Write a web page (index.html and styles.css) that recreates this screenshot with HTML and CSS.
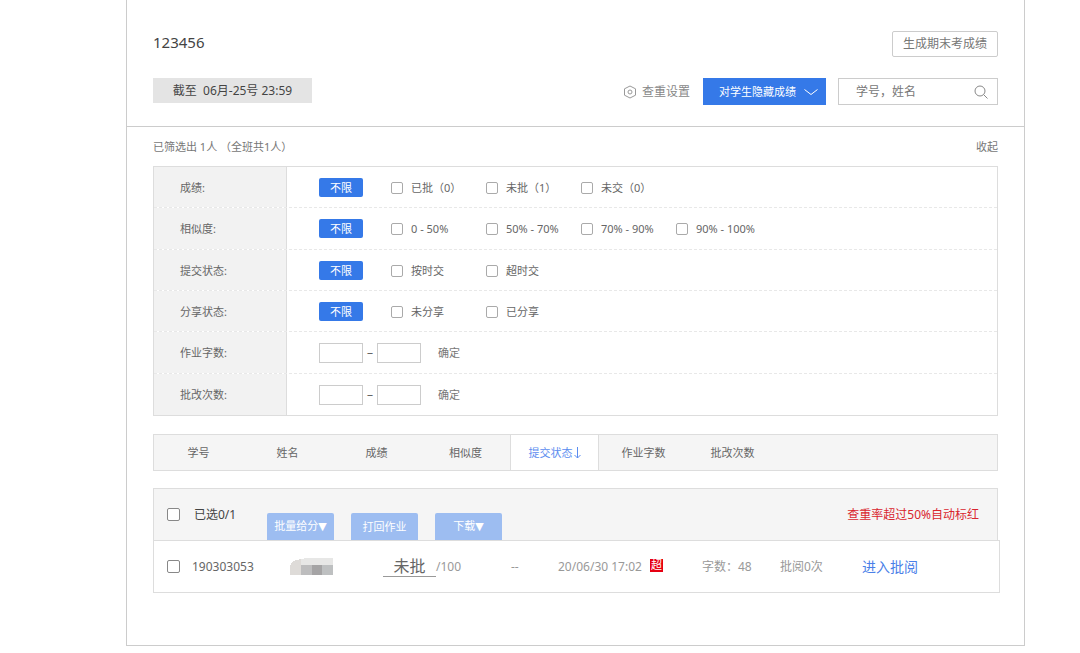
FILE: index.html
```html
<!DOCTYPE html>
<html lang="zh-CN">
<head>
<meta charset="utf-8">
<title>作业批阅</title>
<link rel="stylesheet" href="styles.css">
</head>
<body>
<main class="panel">
  <header class="head">
    <div class="head-row head-top">
      <h1 class="title">123456</h1>
      <button class="btn-outline" type="button">生成期末考成绩</button>
    </div>
    <div class="head-row">
      <span class="deadline">截至&nbsp; 06月-25号 23:59</span>
      <div class="tools">
        <a class="check-link" href="#">
          <svg width="14" height="14" viewBox="0 0 14 14" fill="none" stroke="#999"><path d="M7 1 12.5 3.8V10.2L7 13 1.5 10.2V3.8Z" stroke-linejoin="round"/><circle cx="7" cy="7" r="2"/></svg>
          查重设置
        </a>
        <button class="btn-hide" type="button">对学生隐藏成绩
          <svg width="14" height="8" viewBox="0 0 14 8" fill="none" stroke="#fff"><path d="M.5 1.5 7 6.5 13.5 1.5"/></svg>
        </button>
        <form class="search">
          <input class="search-input" type="text" placeholder="学号，姓名" aria-label="学号，姓名">
          <button class="search-btn" type="button" aria-label="搜索">
            <svg width="14" height="14" viewBox="0 0 14 14" fill="none" stroke="#888"><circle cx="6" cy="6" r="5"/><path d="M9.6 9.6 13.5 13.5"/></svg>
          </button>
        </form>
      </div>
    </div>
  </header>

  <div class="body">
    <div class="summary">
      <span>已筛选出 1人 （全班共1人）</span>
      <button class="text-btn" type="button">收起</button>
    </div>

    <section class="filters">
      <div class="filter">
        <span class="filter-name">成绩:</span>
        <div class="filter-body">
          <button class="any" type="button">不限</button>
          <label class="option"><input class="box" type="checkbox">已批（0）</label>
          <label class="option"><input class="box" type="checkbox">未批（1）</label>
          <label class="option"><input class="box" type="checkbox">未交（0）</label>
        </div>
      </div>
      <div class="filter">
        <span class="filter-name">相似度:</span>
        <div class="filter-body">
          <button class="any" type="button">不限</button>
          <label class="option"><input class="box" type="checkbox">0 - 50%</label>
          <label class="option"><input class="box" type="checkbox">50% - 70%</label>
          <label class="option"><input class="box" type="checkbox">70% - 90%</label>
          <label class="option"><input class="box" type="checkbox">90% - 100%</label>
        </div>
      </div>
      <div class="filter">
        <span class="filter-name">提交状态:</span>
        <div class="filter-body">
          <button class="any" type="button">不限</button>
          <label class="option"><input class="box" type="checkbox">按时交</label>
          <label class="option"><input class="box" type="checkbox">超时交</label>
        </div>
      </div>
      <div class="filter">
        <span class="filter-name">分享状态:</span>
        <div class="filter-body">
          <button class="any" type="button">不限</button>
          <label class="option"><input class="box" type="checkbox">未分享</label>
          <label class="option"><input class="box" type="checkbox">已分享</label>
        </div>
      </div>
      <div class="filter">
        <span class="filter-name">作业字数:</span>
        <div class="filter-body">
          <input class="num" type="text" aria-label="最少作业字数"><span class="dash">–</span><input class="num" type="text" aria-label="最多作业字数">
          <button class="text-btn confirm" type="button">确定</button>
        </div>
      </div>
      <div class="filter">
        <span class="filter-name">批改次数:</span>
        <div class="filter-body">
          <input class="num" type="text" aria-label="最少批改次数"><span class="dash">–</span><input class="num" type="text" aria-label="最多批改次数">
          <button class="text-btn confirm" type="button">确定</button>
        </div>
      </div>
    </section>

    <nav class="sort">
      <button class="sort-item" type="button">学号</button>
      <button class="sort-item" type="button">姓名</button>
      <button class="sort-item" type="button">成绩</button>
      <button class="sort-item" type="button">相似度</button>
      <button class="sort-item active" type="button">提交状态<svg width="8" height="12" viewBox="0 0 8 12" fill="none" stroke="#5b8def"><path d="M4.5 0V11M1.5 8 4.5 11 7.5 8"/></svg></button>
      <button class="sort-item" type="button">作业字数</button>
      <button class="sort-item" type="button">批改次数</button>
    </nav>

    <section class="list">
      <div class="list-head">
        <label class="pick"><input class="box box-lg" type="checkbox">已选0/1</label>
        <div class="actions">
          <button class="action" type="button">批量给分<span class="caret">▼</span></button>
          <button class="action" type="button">打回作业</button>
          <button class="action" type="button">下载<span class="caret">▼</span></button>
        </div>
        <span class="warning">查重率超过50%自动标红</span>
      </div>
      <div class="record">
        <input class="box box-lg" type="checkbox" aria-label="选择 190303053">
        <span class="student">190303053</span>
        <svg class="mosaic" width="43" height="17" viewBox="0 0 43 17" shape-rendering="crispEdges">
          <path d="M0 17V8L3 3 11 1V17Z" fill="#dedbd8"/>
          <path d="M11 1 17 0H43V7H11Z" fill="#e7e7e6"/>
          <path d="M11 7H22V17H11Z" fill="#bdbdbe"/>
          <path d="M22 7H32V17H22Z" fill="#a5a4a5"/>
          <path d="M32 7H43V17H32Z" fill="#bec0c1"/>
        </svg>
        <span class="score"><span class="score-value">未批</span>/100</span>
        <span>--</span>
        <span class="time">20/06/30 17:02 <span class="late">超</span></span>
        <span>字数：48</span>
        <span>批阅0次</span>
        <a class="enter" href="#">进入批阅</a>
      </div>
    </section>
  </div>
</main>
</body>
</html>
```
FILE: styles.css
```css
* {
  box-sizing: border-box;
}

body {
  margin: 0;
  background: #fff;
  color: #666;
  font: 12px/20px "Noto Sans", "Noto Sans CJK SC", sans-serif;
}

button,
input {
  margin: 0;
  padding: 0;
  border: 0;
  background: none;
  color: inherit;
  font: inherit;
}

svg {
  display: block;
  flex: none;
}

a {
  text-decoration: none;
}

.panel {
  margin: 0 55px 0 126px;
  padding-bottom: 52px;
  border: solid #ccc;
  border-width: 0 1px 1px;
}

.head {
  display: flex;
  flex-direction: column;
  gap: 21px;
  padding: 31px 26px 21px;
  border-bottom: 1px solid #ccc;
}

.head-row,
.tools,
.summary {
  display: flex;
  align-items: center;
  justify-content: space-between;
}

.head-top {
  align-items: flex-start;
}

.title {
  margin: 0;
  color: #444;
  font-size: 15px;
  font-weight: 400;
  line-height: 22px;
}

.btn-outline {
  width: 106px;
  height: 26px;
  border: 1px solid #ccc;
  border-radius: 2px;
  color: #777;
}

.deadline {
  width: 159px;
  margin-bottom: 2px;
  background: #e4e4e4;
  color: #444;
  line-height: 25px;
  text-align: center;
}

.check-link {
  display: flex;
  align-items: center;
  gap: 5px;
  margin-right: 13px;
  color: #888;
}

.btn-hide {
  display: flex;
  align-items: center;
  justify-content: center;
  gap: 8px;
  width: 123px;
  height: 27px;
  padding-left: 8px;
  margin-right: 12px;
  background: #3579e8;
  color: #fff;
  font-size: 11px;
}

.search {
  display: flex;
  align-items: center;
  width: 160px;
  height: 27px;
  border: 1px solid #ccc;
}

.search-input {
  flex: 1;
  min-width: 0;
  padding-left: 17px;
}

.search-input::placeholder {
  color: #777;
}

.search-btn {
  padding: 0 9px;
}

.body {
  padding: 0 26px;
  font-size: 11px;
}

.summary {
  height: 39px;
  color: #777;
}

.filters {
  display: grid;
  grid-template-rows: repeat(6, 1fr);
  min-height: 250px;
  border: 1px solid #ddd;
}

.filter {
  display: flex;
  border-bottom: 1px dashed #e8e8e8;
}

.filter:last-child {
  border-bottom: 0;
}

.filter-name {
  display: flex;
  align-items: center;
  width: 133px;
  padding: 2px 0 0 26px;
  border-right: 1px solid #ddd;
  background: #f2f2f2;
}

.filter-body {
  display: flex;
  align-items: center;
  padding: 1px 0 0 32px;
}

.any {
  width: 44px;
  height: 19px;
  margin-right: 28px;
  border-radius: 2px;
  background: #3579e8;
  color: #fff;
  line-height: 19px;
}

.option {
  display: flex;
  align-items: center;
  gap: 8px;
  width: 95px;
  padding-top: 1px;
  white-space: nowrap;
}

.box {
  flex: none;
  width: 12px;
  height: 12px;
  border: 1px solid #aaa;
  border-radius: 2px;
  background: #fff;
  appearance: none;
}

.box:checked {
  background: #3579e8;
}

.box-lg {
  width: 13px;
  height: 13px;
  border-color: #888;
}

.num {
  width: 44px;
  height: 20px;
  border: 1px solid #ccc;
}

.dash {
  width: 14px;
  font-size: 12px;
  text-align: center;
}

.text-btn {
  color: #777;
}

.confirm {
  margin-left: 17px;
}

.sort {
  display: flex;
  height: 37px;
  margin-top: 18px;
  border: 1px solid #ddd;
  background: #f5f5f5;
}

.sort-item {
  display: flex;
  align-items: center;
  justify-content: center;
  width: 89px;
}

.sort-item.active {
  border: solid #ddd;
  border-width: 0 1px;
  background: #fff;
  color: #5b8def;
}

.list {
  margin-top: 17px;
  font-size: 12px;
}

.list-head {
  display: flex;
  align-items: center;
  height: 52px;
  padding: 0 18px 0 13px;
  border: 1px solid #ddd;
  border-bottom: 0;
  background: #f5f5f5;
}

.pick {
  display: flex;
  align-items: center;
  gap: 14px;
  width: 100px;
  color: #444;
}

.actions {
  display: flex;
  align-self: flex-end;
  gap: 17px;
}

.action {
  width: 67px;
  height: 27px;
  border-radius: 2px 2px 0 0;
  background: #9dbdf1;
  color: #fff;
  font-size: 11px;
}

.caret {
  font-family: "DejaVu Sans", sans-serif;
}

.warning {
  margin-left: auto;
  color: #d9262f;
}

.record {
  display: grid;
  grid-template-columns: 25px 98px 93px 128px 47px 144px 78px 82px 1fr;
  align-items: center;
  height: 53px;
  margin-right: -2px;
  padding-left: 13px;
  border: 1px solid #ddd;
  color: #999;
  white-space: nowrap;
}

.student {
  color: #666;
}

.score {
  display: flex;
  align-items: center;
}

.score-value {
  width: 53px;
  border-bottom: 1px solid #999;
  color: #666;
  font-size: 16px;
  text-align: center;
}

.time {
  display: flex;
  align-items: center;
  gap: 8px;
}

.late {
  width: 13px;
  height: 13px;
  margin-bottom: 3px;
  background: #e60012;
  color: #fff;
  font-size: 11px;
  line-height: 12px;
  text-align: center;
}

.enter {
  color: #4a80e8;
  font-size: 14px;
}
```
